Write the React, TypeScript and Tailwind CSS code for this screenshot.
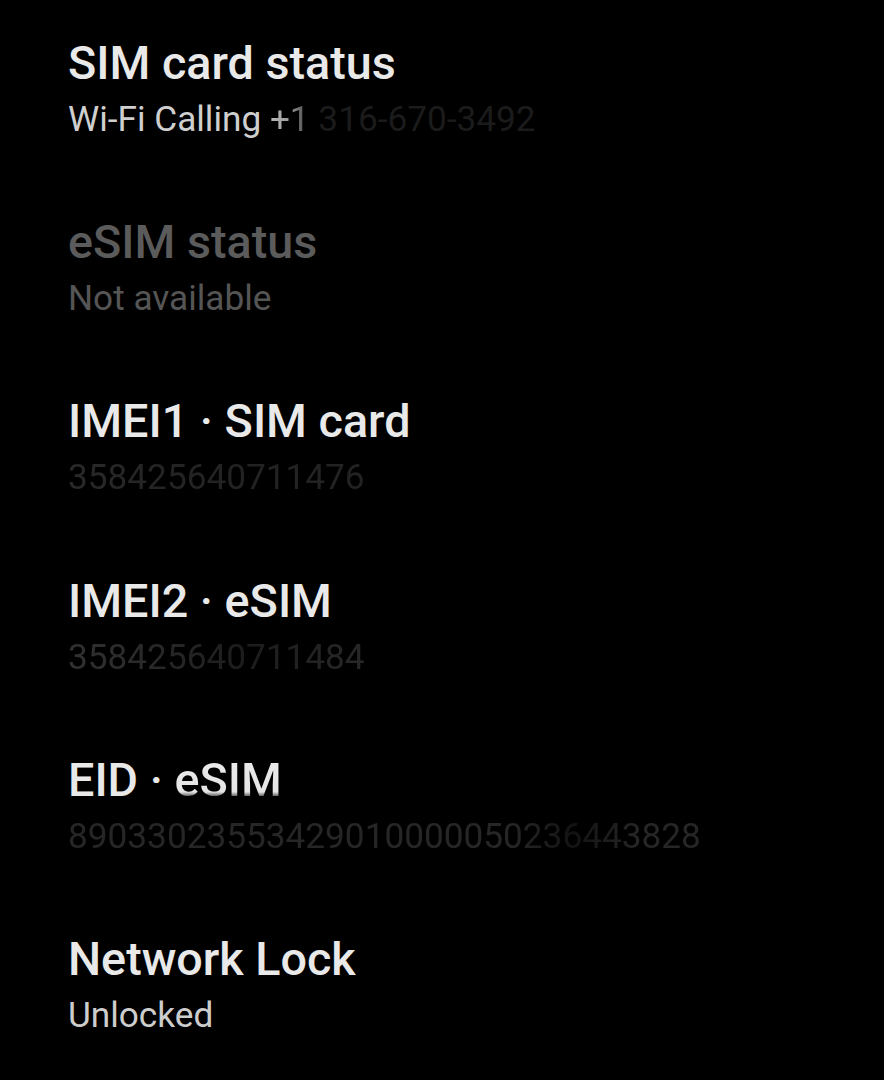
import React from "react";

function Row({
  title,
  sub,
  titleClass = "text-[#e9e9e9]",
  subClass = "text-[#cfcfcf]",
}: {
  title: React.ReactNode;
  sub: React.ReactNode;
  titleClass?: string;
  subClass?: string;
}) {
  return (
    <div className="h-[179.2px] flex flex-col">
      <div className={`text-[46.7px] leading-[58px] font-medium whitespace-nowrap ${titleClass}`}>{title}</div>
      <div className={`mt-[5px] text-[35.2px] leading-[44px] font-normal whitespace-nowrap ${subClass}`}>{sub}</div>
    </div>
  );
}

export default function App() {
  return (
    <div
      className="w-[884px] h-[1080px] bg-black overflow-hidden pl-[68px] pt-[34px]"
      style={{ fontFamily: "Roboto, 'Noto Sans', sans-serif" }}
    >
      <Row
        title="SIM card status"
        sub={
          <>
            <span>Wi-Fi Calling </span>
            <span className="bg-[linear-gradient(to_right,#b8b8b8_0%,#9a9a9a_50%,#3a3a3a_100%)] bg-clip-text text-transparent">+1</span>
            <span className="text-[#1b1b1b]"> 316-670-3492</span>
          </>
        }
      />
      <Row title="eSIM status" sub="Not available" titleClass="text-[#5b5b5b]" subClass="text-[#555555]" />
      <Row
        title="IMEI1 · SIM card"
        sub={
          <span className="bg-[linear-gradient(to_right,#292929_0%,#232323_40%,#222222_100%)] bg-clip-text text-transparent">
            358425640711476
          </span>
        }
      />
      <Row
        title="IMEI2 · eSIM"
        sub={
          <span className="bg-[linear-gradient(to_right,#313131_0%,#282828_30%,#1c1c1c_60%,#282828_100%)] bg-clip-text text-transparent">
            358425640711484
          </span>
        }
      />
      <Row
        title={
          <>
            <span>EID · </span>
            <span className="bg-[linear-gradient(to_bottom,#ececec_0%,#e4e4e4_72%,#5e5e5e_80%,#8c8c8c_100%)] bg-clip-text text-transparent">
              eSIM
            </span>
          </>
        }
        sub={
          <span className="bg-[linear-gradient(to_right,#262626_0%,#262626_70%,#131313_80%,#262626_90%,#262626_100%)] bg-clip-text text-transparent">
            89033023553429010000050236443828
          </span>
        }
      />
      <Row title="Network Lock" sub="Unlocked" subClass="text-[#cdcdcd]" />
    </div>
  );
}
